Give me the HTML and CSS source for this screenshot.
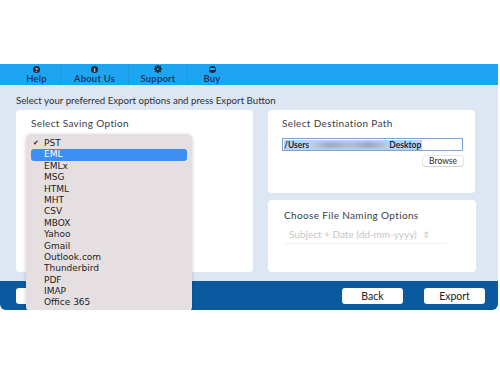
FILE: index.html
```html
<!DOCTYPE html>
<html lang="en">
<head>
  <meta charset="UTF-8">
  <title>Export Options</title>
  <link rel="stylesheet" href="styles.css">
</head>
<body>
  <div class="window">
    <div class="toolbar">
      <div class="tool tool-help">
        <span class="ico">?</span>
        <span class="label">Help</span>
      </div>
      <div class="tool tool-about">
        <span class="ico">i</span>
        <span class="label">About Us</span>
      </div>
      <div class="tool tool-support">
        <svg class="gear" viewBox="0 0 10 10" width="8" height="8">
          <g fill="#1d2a3a">
            <rect x="4" y="0" width="2" height="10"/>
            <rect x="0" y="4" width="10" height="2"/>
            <rect x="4" y="0" width="2" height="10" transform="rotate(45 5 5)"/>
            <rect x="4" y="0" width="2" height="10" transform="rotate(-45 5 5)"/>
            <circle cx="5" cy="5" r="3.2"/>
          </g>
          <circle cx="5" cy="5" r="1.2" fill="#1ea5f2"/>
        </svg>
        <span class="label">Support</span>
      </div>
      <div class="tool tool-buy">
        <span class="ico ico-buy"><span class="bar"></span></span>
        <span class="label">Buy</span>
      </div>
    </div>

    <div class="main">
      <p class="intro">Select your preferred Export options and press Export Button</p>
      <div class="panels">
        <div class="panel panel-left">
          <h3>Select Saving Option</h3>
          <ul class="menu">
            <li class="checked">PST</li>
            <li class="active">EML</li>
            <li>EMLx</li>
            <li>MSG</li>
            <li>HTML</li>
            <li>MHT</li>
            <li>CSV</li>
            <li>MBOX</li>
            <li>Yahoo</li>
            <li>Gmail</li>
            <li>Outlook.com</li>
            <li>Thunderbird</li>
            <li>PDF</li>
            <li>IMAP</li>
            <li>Office 365</li>
          </ul>
        </div>
        <div class="right-col">
          <div class="panel panel-dest">
            <h3>Select Destination Path</h3>
            <div class="path-input">
              <span class="sel">/Users<span class="blur"></span>Desktop</span>
            </div>
            <div class="browse-row">
              <span class="browse">Browse</span>
            </div>
          </div>
          <div class="panel panel-naming">
            <h3>Choose File Naming Options</h3>
            <div class="naming-select">
              Subject + Date (dd-mm-yyyy)
              <span class="updown">&#8661;</span>
            </div>
          </div>
        </div>
      </div>
    </div>

    <div class="footer">
      <span class="btn btn-hidden">Add</span>
      <div class="footer-right">
        <span class="btn">Back</span>
        <span class="btn">Export</span>
      </div>
    </div>
  </div>
</body>
</html>
```

FILE: styles.css
```css
body {
  margin: 0;
  padding-top: 64px;
  background: #ffffff;
  font-family: "Lato", "DejaVu Sans", sans-serif;
  color: #2b2f36;
}
.window {
  width: 498px;
}
.toolbar {
  display: flex;
  height: 21px;
  padding-left: 13px;
  background: #1ea5f2;
}
.tool {
  display: flex;
  flex-direction: column;
  align-items: center;
  justify-content: center;
  border-right: 1px solid rgba(0, 0, 0, 0.08);
}
.tool-help { width: 47px; }
.tool-about { width: 67px; }
.tool-support { width: 58px; }
.tool-buy { width: 48px; border-right: none; }
.ico {
  width: 7px;
  height: 7px;
  border-radius: 50%;
  background: #1d2a3a;
  color: #ffffff;
  font-size: 6px;
  font-weight: bold;
  line-height: 7px;
  text-align: center;
}
.ico-buy {
  display: flex;
  align-items: center;
  justify-content: center;
}
.ico-buy .bar {
  width: 5px;
  height: 1.5px;
  background: #1ea5f2;
}
.gear {
  display: block;
}
.label {
  font-size: 9.5px;
  line-height: 11px;
  letter-spacing: 0.2px;
  color: #1d3050;
  font-weight: 600;
}
.main {
  background: #dde7f4;
  padding: 9px 22px 0 16px;
  height: 196px;
  box-sizing: border-box;
}
.intro {
  margin: 0 0 4px 0;
  font-size: 9.7px;
  line-height: 12px;
  color: #2c3038;
}
.panels {
  display: flex;
  gap: 15px;
}
.panel {
  background: #ffffff;
  border-radius: 4px;
}
.panel h3 {
  margin: 0;
  font-size: 10px;
  font-weight: normal;
  letter-spacing: 0.35px;
  color: #3a3d43;
}
.panel-left {
  position: relative;
  width: 238px;
  height: 162px;
  padding: 7px 0 0 15px;
  box-sizing: border-box;
}
.menu {
  position: absolute;
  left: 10px;
  top: 24px;
  width: 166px;
  height: 178px;
  margin: 0;
  padding: 4px 5px 3px;
  box-sizing: border-box;
  list-style: none;
  background: #e6dfe1;
  border-radius: 5px;
  box-shadow: 0 1px 4px rgba(0, 0, 0, 0.2);
  z-index: 5;
  font-family: "DejaVu Sans", sans-serif;
}
.menu li {
  height: 11.4px;
  line-height: 11.4px;
  padding-left: 13px;
  font-size: 9px;
  color: #222222;
  border-radius: 3px;
  position: relative;
}
.menu li.checked::before {
  content: "\2714";
  position: absolute;
  left: 2px;
  font-size: 7px;
}
.menu li.active {
  background: #3d8ef2;
  color: #ffffff;
}
.right-col {
  display: flex;
  flex-direction: column;
  gap: 7px;
}
.panel-dest {
  width: 207px;
  height: 83px;
  padding: 7px 12px 0 14px;
  box-sizing: border-box;
}
.path-input {
  margin-top: 9px;
  height: 13px;
  border: 1px solid #7ba3d6;
  box-sizing: border-box;
  padding: 0 1px;
  font-size: 8.5px;
  line-height: 10px;
  color: #1d2430;
  font-weight: 700;
  display: flex;
  align-items: center;
}
.sel {
  background: #b8d4f4;
  display: inline-flex;
  align-items: center;
  height: 10px;
  padding-right: 1px;
}
.blur {
  display: inline-block;
  width: 80px;
  height: 6px;
  border-radius: 3px;
  background: linear-gradient(90deg, #c3d3e6, #9eacbd, #b2c0d1, #9aa8ba, #c0cee0);
  filter: blur(1.2px);
}
.browse-row {
  display: flex;
  justify-content: flex-end;
  margin-top: 5px;
}
.browse {
  font-size: 8.5px;
  line-height: 10px;
  color: #2a2a2a;
  padding: 0 6px;
  border-radius: 2px;
  background: #ffffff;
  box-shadow: 0 0 0 0.5px #c9c9c9, 0 1px 1px rgba(0, 0, 0, 0.15);
}
.panel-naming {
  width: 208px;
  height: 72px;
  padding: 9px 12px 0 16px;
  box-sizing: border-box;
}
.naming-select {
  margin-top: 5px;
  padding: 2px 0 3px 5px;
  font-size: 10px;
  color: #c4c6ca;
  width: 158px;
  border-bottom: 1px solid #f0f0f2;
}
.updown {
  margin-left: 3px;
  font-size: 9px;
}
.footer {
  display: flex;
  align-items: center;
  justify-content: space-between;
  height: 29px;
  padding: 0 13px 0 16px;
  background: #0b5a9f;
  border-radius: 0 0 6px 6px;
}
.footer-right {
  display: flex;
  gap: 21px;
}
.btn {
  width: 61px;
  height: 16px;
  line-height: 16px;
  text-align: center;
  background: #ffffff;
  border-radius: 3px;
  font-size: 10.5px;
  color: #222222;
}
.btn-hidden {
  width: 40px;
}
```
